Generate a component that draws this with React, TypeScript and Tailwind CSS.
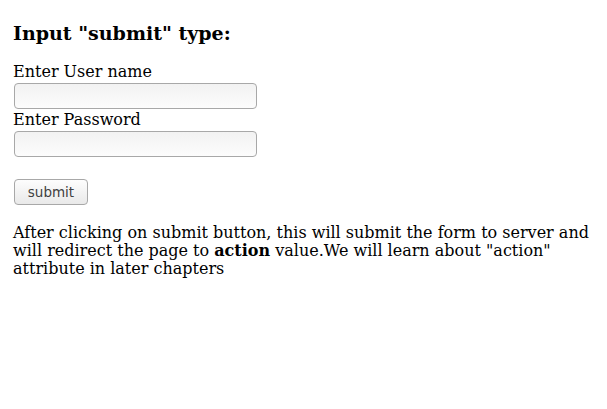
import React from 'react';

const fieldClass =
  'block w-[243px] h-[26px] rounded-[4px] border border-[#a8a8a8] bg-gradient-to-b from-[#f2f2f2] to-[#fcfcfc] px-1 outline-none';

export default function App() {
  return (
    <div className="min-h-[409px] bg-white pl-[13px] pr-3 pt-2 font-['DejaVu_Serif',serif] text-[16px] leading-[18px] text-black">
      <h3 className="mt-[14px] mb-[17px] text-[19px] font-bold leading-[22px]">Input "submit" type:</h3>
      <form>
        <label className="block leading-[22px]">Enter User name</label>
        <input type="text" className={`${fieldClass} ml-[1px]`} />
        <label className="block leading-[22px]">Enter Password</label>
        <input type="password" className={`${fieldClass} ml-[1px]`} />
        <div className="mt-[22px]">
          <button
            type="button"
            className="ml-[1px] w-[74px] h-[26px] rounded-[4px] border border-[#a8a8a8] bg-gradient-to-b from-[#fdfdfd] to-[#e9e9e9] font-['DejaVu_Sans',sans-serif] text-[13.5px] text-[#404040]"
          >
            submit
          </button>
        </div>
      </form>
      <p className="mt-[19px]">
        After clicking on submit button, this will submit the form to server and will redirect the page to{' '}
        <b>action</b> value.We will learn about "action" attribute in later chapters
      </p>
    </div>
  );
}
